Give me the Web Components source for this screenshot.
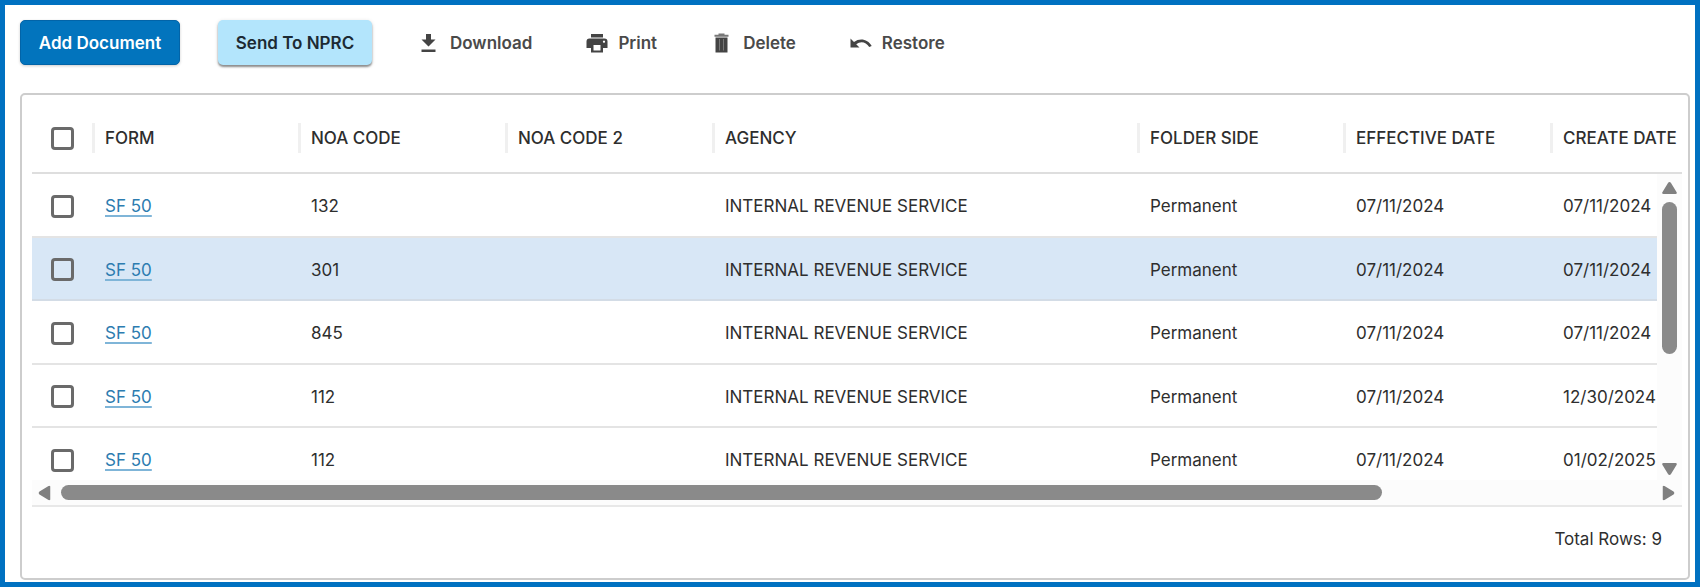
<!DOCTYPE html>
<html lang="en">
<head>
<meta charset="utf-8">
<title>Documents</title>
<style>
body { margin: 0; background: #fff; font-family: Inter, "Liberation Sans", sans-serif; font-size: 17px; line-height: 24px; color: #2e2e2e; }
</style>
</head>
<body>
<document-page></document-page>
<script>
const define = (name, html, setup) => {
  const template = document.createElement('template');
  template.innerHTML = html;
  customElements.define(name, class extends HTMLElement {
    constructor() {
      super();
      this.attachShadow({ mode: 'open' }).append(template.content.cloneNode(true));
    }
    connectedCallback() {
      if (setup && !this.ready) { this.ready = true; setup(this, this.shadowRoot); }
    }
  });
};

define('action-button', `
<style>
:host { display: block; }
button { display: flex; align-items: center; justify-content: center; gap: 9px; box-sizing: border-box; height: 45px; padding: 0; border: 0; border-radius: 5px; background: none; font: inherit; font-weight: 600; color: #4a4a4a; white-space: nowrap; cursor: pointer; }
:host([kind="primary"]) button { width: 160px; background: #0274bd; color: #fff; border: 1px solid #0264a8; box-shadow: 0 1px 3px #0003; }
:host([kind="secondary"]) button { width: 154px; background: #b3e5fc; color: #1c2a33; box-shadow: 0 2px 2px #0006, 0 1px 4px #0002; }
</style>
<button type="button"><slot name="icon"></slot><slot></slot></button>`);

define('tool-bar', `
<style>
:host { display: flex; align-items: center; }
.main { display: flex; gap: 38px; margin-right: 45px; }
.links { display: flex; gap: 53px; }
svg { display: block; flex: none; fill: #444; }
</style>
<div class="main">
  <action-button kind="primary">Add Document</action-button>
  <action-button kind="secondary">Send To NPRC</action-button>
</div>
<div class="links">
  <action-button><svg slot="icon" width="24" height="20" viewBox="0 0 24 20" aria-hidden="true"><path d="M9 1h5v5.500h4.500l-7 7-7-7H9z"/><path d="M4.500 16.500h14V19h-14z"/></svg>Download</action-button>
  <action-button><svg slot="icon" width="24" height="20" viewBox="0 0 24 20" aria-hidden="true"><path d="M6 1h12v3.500H6z"/><path fill-rule="evenodd" d="M4.500 5.500h15a3 3 0 0 1 3 3v6.500H18v4.500H6V15H1.500V8.500a3 3 0 0 1 3-3zM8.500 12v5.500h7V12zM19 7.500a1.100 1.100 0 1 0 .01 0z"/></svg>Print</action-button>
  <action-button><svg slot="icon" width="24" height="20" viewBox="0 0 24 20" aria-hidden="true"><path fill="#777" d="M8.500 .5h6v1.200h4v2h-14v-2h4z"/><path d="M5.500 4.500h12v15h-12z"/><path d="M9.500 6v11.500M13.500 6v11.500" stroke="#777" fill="none"/></svg>Delete</action-button>
  <action-button><svg slot="icon" width="24" height="20" viewBox="0 0 24 20" aria-hidden="true"><path d="M1.500 5.500v9h9l-3.300-3.300c4.300-3.400 9.800-2.500 13 2.800l2.500-1C19 6.200 11 4.500 5 9z"/></svg>Restore</action-button>
</div>`);

define('scroll-track', `
<style>
:host { display: flex; flex-direction: column; align-items: center; padding: 8px 0 5px; box-sizing: border-box; background: #fcfcfc; }
.track { display: flex; flex-direction: column; flex: 1; width: 15px; margin: 8px 0; min-height: 0; }
.thumb { flex: none; height: var(--thumb); border-radius: 8px; background: #8a8a8a; }
svg { display: block; flex: none; fill: #808080; }
.end { transform: rotate(180deg); }
:host([horizontal]) { flex-direction: row; padding: 0 6px 0 5px; }
:host([horizontal]) .track { width: auto; height: 15px; margin: 0 9px; }
:host([horizontal]) .thumb { height: 15px; width: var(--thumb); }
:host([horizontal]) .start { transform: rotate(-90deg); }
:host([horizontal]) .end { transform: rotate(90deg); }
</style>
<svg class="start" width="15" height="12" viewBox="0 0 15 12" aria-hidden="true"><path d="M7.500 0Q8.400 0 9 1l5.500 9q1 2-1 2h-12q-2 0-1-2L6 1q.6-1 1.500-1z"/></svg>
<div class="track"><div class="thumb"></div></div>
<svg class="end" width="15" height="12" viewBox="0 0 15 12" aria-hidden="true"><path d="M7.500 0Q8.400 0 9 1l5.500 9q1 2-1 2h-12q-2 0-1-2L6 1q.6-1 1.500-1z"/></svg>`);

define('document-table', `
<style>
:host { display: grid; grid-template-columns: minmax(0, 1fr) 25px; grid-template-rows: 70px 306px 25px; border-bottom: 2px solid #e8e8e8; }
.rows { grid-area: 1 / 1 / 3 / 3; overflow: hidden; min-height: 0; }
table { width: 100%; border-collapse: separate; border-spacing: 0; table-layout: fixed; }
th, td { box-sizing: border-box; padding: 0; text-align: left; white-space: nowrap; vertical-align: middle; }
th { height: 70px; font-weight: 500; border-bottom: 2px solid #dedede; }
th span { display: inline-flex; align-items: center; height: 30px; padding-left: 10px; border-left: 3px solid #f0f0f0; vertical-align: middle; }
td { height: 64px; padding: 2px 0 0 13px; border-bottom: 2px solid #e4e4e4; }
tr:nth-child(even) td { height: 63px; }
th:first-child, td:first-child { padding-left: 19px; }
tr.active td { background: #d8e7f6; border-color: #d3dce6; }
input { appearance: none; display: block; box-sizing: border-box; width: 23px; height: 23px; margin: 0; border: 3px solid #6a6a6a; border-radius: 4px; }
a { color: #2c7cb0; text-decoration: underline; text-decoration-color: #7fb5d8; text-decoration-thickness: 2px; text-underline-offset: 3px; }
.v { grid-area: 2 / 2; --thumb: 152px; }
.h { grid-area: 3 / 1 / 4 / 3; --thumb: 83%; }
</style>
<div class="rows">
<table>
<colgroup><col style="width:60px"><col style="width:206px"><col style="width:207px"><col style="width:207px"><col style="width:425px"><col style="width:206px"><col style="width:207px"><col></colgroup>
<thead><tr><th><input type="checkbox" aria-label="Select all rows"></th></tr></thead>
<tbody></tbody>
</table>
</div>
<scroll-track class="v"></scroll-track>
<scroll-track class="h" horizontal></scroll-track>`, (host, root) => {
  const columns = ['FORM', 'NOA CODE', 'NOA CODE 2', 'AGENCY', 'FOLDER SIDE', 'EFFECTIVE DATE', 'CREATE DATE'];
  const rows = [['132', '07/11/2024'], ['301', '07/11/2024'], ['845', '07/11/2024'], ['112', '12/30/2024'], ['112', '01/02/2025']];
  root.querySelector('thead tr').insertAdjacentHTML('beforeend', columns.map(c => `<th scope="col"><span>${c}</span></th>`).join(''));
  root.querySelector('tbody').innerHTML = rows.map(([code, created], i) => `
    <tr${i === 1 ? ' class="active"' : ''}><td><input type="checkbox" aria-label="Select row ${i + 1}"></td>
    <td><a href="#form">SF 50</a></td><td>${code}</td><td></td><td>INTERNAL REVENUE SERVICE</td>
    <td>Permanent</td><td>07/11/2024</td><td>${created}</td></tr>`).join('');
});

define('document-page', `
<style>
:host { display: flex; flex-direction: column; box-sizing: border-box; min-height: 100vh; border: 5px solid #0071c1; padding: 15px 5px 2px 15px; }
section { flex: 1; box-sizing: border-box; margin-top: 28px; padding: 9px 6px 0 10px; border: 2px solid #cdcdcd; border-radius: 5px; }
footer { padding: 20px 20px 26px; text-align: right; }
</style>
<tool-bar></tool-bar>
<section>
  <document-table></document-table>
  <footer>Total Rows: 9</footer>
</section>`);
</script>
</body>
</html>
